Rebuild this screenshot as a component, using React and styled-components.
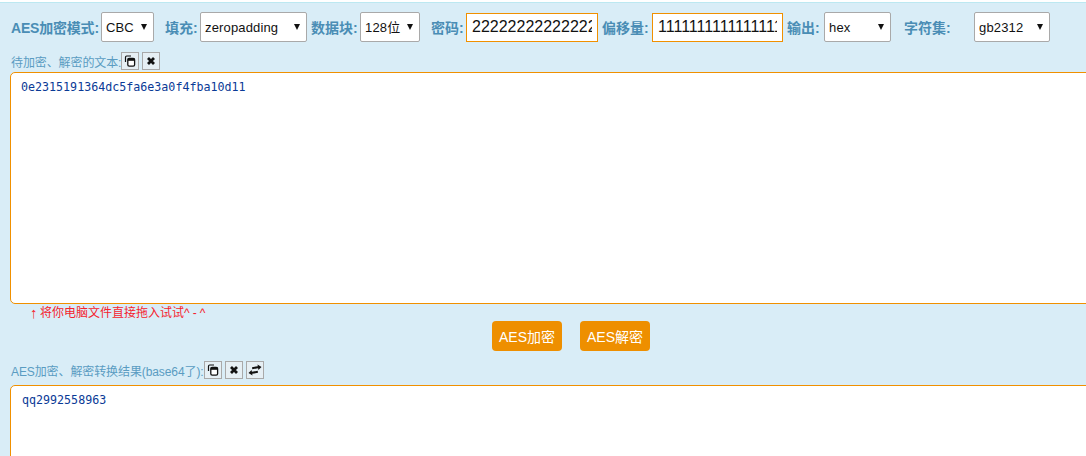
import React from "react";
import styled, { createGlobalStyle } from "styled-components";

const GlobalStyle = createGlobalStyle`
    html, body {
        margin: 0;
        padding: 0;
        height: 456px;
        overflow: hidden;
        background: #fff;
    }
`;

const Page = styled.div`
    box-sizing: border-box;
    width: 1142px;
    height: 456px;
    margin-top: 2px;
    padding: 9px 0 0 10px;
    overflow: hidden;
    background: #d9edf7;
    border-top: 1px solid #bce8f1;
    font-family: "Liberation Sans", "Noto Sans CJK SC", sans-serif;
`;

const Toolbar = styled.div`
    display: flex;
    align-items: center;
    height: 30px;
    padding-left: 1px;
`;

const FieldLabel = styled.label`
    flex: none;
    margin-left: ${(p) => p.$left || 0}px;
    margin-right: 3px;
    width: ${(p) => p.$width}px;
    font-size: 14px;
    letter-spacing: ${(p) => (p.$strong ? "-0.2px" : "0")};
    font-weight: bold;
    color: #4a8db5;
    white-space: nowrap;
`;

const SelectBox = styled.div`
    position: relative;
    flex: none;
    box-sizing: border-box;
    width: ${(p) => p.$width}px;
    height: 30px;
    background: #fff;
    border: 1px solid #a9a9a9;
    border-radius: 2px;

    &::after {
        content: "";
        position: absolute;
        top: 11px;
        right: 6px;
        border-left: 3.5px solid transparent;
        border-right: 3.5px solid transparent;
        border-top: 6px solid #111;
        pointer-events: none;
    }
`;

const NativeSelect = styled.select`
    appearance: none;
    width: 100%;
    height: 100%;
    padding: 0 0 0 4px;
    border: 0;
    background: transparent;
    font-family: inherit;
    font-size: 13px;
    letter-spacing: 0.15px;
    color: #111;
    outline: none;
`;

const KeyInput = styled.input`
    flex: none;
    box-sizing: border-box;
    width: ${(p) => p.$width}px;
    height: 29px;
    padding: 0 5px;
    background: #fff;
    border: 1px solid #f09000;
    font-family: inherit;
    font-size: 16px;
    color: #111;
    outline: none;
`;

const TextTitle = styled.div`
    display: flex;
    align-items: center;
    height: 18px;
    margin-top: 10px;
    padding-left: 1px;
    font-size: 12px;
    color: #5a9cc2;
    white-space: nowrap;
`;

const TitleText = styled.span`
    flex: none;
    width: ${(p) => p.$width}px;
    letter-spacing: -0.1px;
`;

const IconButton = styled.button`
    display: flex;
    align-items: center;
    justify-content: center;
    box-sizing: border-box;
    width: 18px;
    height: 18px;
    margin-right: 3px;
    padding: 0;
    background: #e6eff4;
    border: 1px solid #a9a9a9;
    border-radius: 0;
`;

const TextPane = styled.textarea`
    display: block;
    box-sizing: border-box;
    width: 1132px;
    height: ${(p) => p.$height}px;
    margin-top: ${(p) => p.$top}px;
    padding: 6px 10px 6px ${(p) => p.$inset}px;
    background: #fff;
    border: 1px solid #f09000;
    border-radius: 5px;
    resize: none;
    outline: none;
    font-family: "DejaVu Sans Mono", "Liberation Mono", monospace;
    font-size: 11.67px;
    line-height: 16px;
    color: #0a3a96;
`;

const DropHint = styled.div`
    display: flex;
    align-items: center;
    height: 17px;
    padding-left: 20px;
    font-size: 12px;
    line-height: 16px;
    color: #f5222d;
`;

const HintArrow = styled.span`
    width: 10px;
    font-size: 15px;
    font-weight: bold;
`;

const HintFace = styled.span`
    letter-spacing: 3px;
`;

const ActionRow = styled.div`
    display: flex;
    justify-content: center;
    gap: 18px;
    padding-right: 10px;
`;

const ActionButton = styled.button`
    width: 70px;
    height: 30px;
    padding: 0;
    background: #ee8f00;
    border: 0;
    border-radius: 4px;
    font-family: inherit;
    font-size: 14px;
    color: #fff;
`;

const CopyIcon = () => (
    <svg width="12" height="12" viewBox="0 0 12 12">
        <path d="M1.5 7V2.2Q1.5 1 2.7 1H7" fill="none" stroke="#111" strokeWidth="1.2" />
        <rect x="3.8" y="3.4" width="6.8" height="7.8" rx="1.4" fill="#fff" stroke="#111" strokeWidth="1.3" />
        <rect x="3.8" y="3.4" width="6.8" height="2.4" fill="#111" />
    </svg>
);

const ClearIcon = () => (
    <svg width="12" height="12" viewBox="0 0 12 12">
        <path d="M3 3l6 6M9 3l-6 6" stroke="#111" strokeWidth="2.8" />
    </svg>
);

const SwapIcon = () => (
    <svg width="14" height="12" viewBox="0 0 14 12">
        <path d="M13.5 3L9.5 .5l.3 1.7L4 3.2l.3 2 5.8-1 .3 1.8zM.5 9l4 2.5-.3-1.7 5.8-1-.3-2-5.8 1L3.6 6z" fill="#111" />
    </svg>
);

function App() {
    return (
        <Page>
            <GlobalStyle />
            <Toolbar>
                <FieldLabel $strong $width={87}>AES加密模式:</FieldLabel>
                <SelectBox $width={53}>
                    <NativeSelect defaultValue="CBC">
                        <option>CBC</option>
                    </NativeSelect>
                </SelectBox>
                <FieldLabel $left={11} $width={32}>填充:</FieldLabel>
                <SelectBox $width={107}>
                    <NativeSelect defaultValue="zeropadding">
                        <option>zeropadding</option>
                    </NativeSelect>
                </SelectBox>
                <FieldLabel $left={4} $width={46}>数据块:</FieldLabel>
                <SelectBox $width={60}>
                    <NativeSelect defaultValue="128位">
                        <option>128位</option>
                    </NativeSelect>
                </SelectBox>
                <FieldLabel $left={11} $width={32}>密码:</FieldLabel>
                <KeyInput $width={132} defaultValue="2222222222222222" />
                <FieldLabel $left={4} $width={47}>偏移量:</FieldLabel>
                <KeyInput $width={131} defaultValue="1111111111111111" />
                <FieldLabel $left={4} $width={34}>输出:</FieldLabel>
                <SelectBox $width={67}>
                    <NativeSelect defaultValue="hex">
                        <option>hex</option>
                    </NativeSelect>
                </SelectBox>
                <FieldLabel $left={13} $width={67}>字符集:</FieldLabel>
                <SelectBox $width={76}>
                    <NativeSelect defaultValue="gb2312">
                        <option>gb2312</option>
                    </NativeSelect>
                </SelectBox>
            </Toolbar>
            <TextTitle>
                <TitleText $width={110}>待加密、解密的文本:</TitleText>
                <IconButton><CopyIcon /></IconButton>
                <IconButton><ClearIcon /></IconButton>
            </TextTitle>
            <TextPane $height={232} $top={2} $inset={10} readOnly value="0e2315191364dc5fa6e3a0f4fba10d11" />
            <DropHint>
                <HintArrow>↑</HintArrow>
                将你电脑文件直接拖入试试
                <HintFace>^-^</HintFace>
            </DropHint>
            <ActionRow>
                <ActionButton>AES加密</ActionButton>
                <ActionButton>AES解密</ActionButton>
            </ActionRow>
            <TextTitle>
                <TitleText $width={193}>AES加密、解密转换结果(base64了):</TitleText>
                <IconButton><CopyIcon /></IconButton>
                <IconButton><ClearIcon /></IconButton>
                <IconButton><SwapIcon /></IconButton>
            </TextTitle>
            <TextPane $height={120} $top={6} $inset={11} readOnly value="qq2992558963" />
        </Page>
    );
}

export default App;
